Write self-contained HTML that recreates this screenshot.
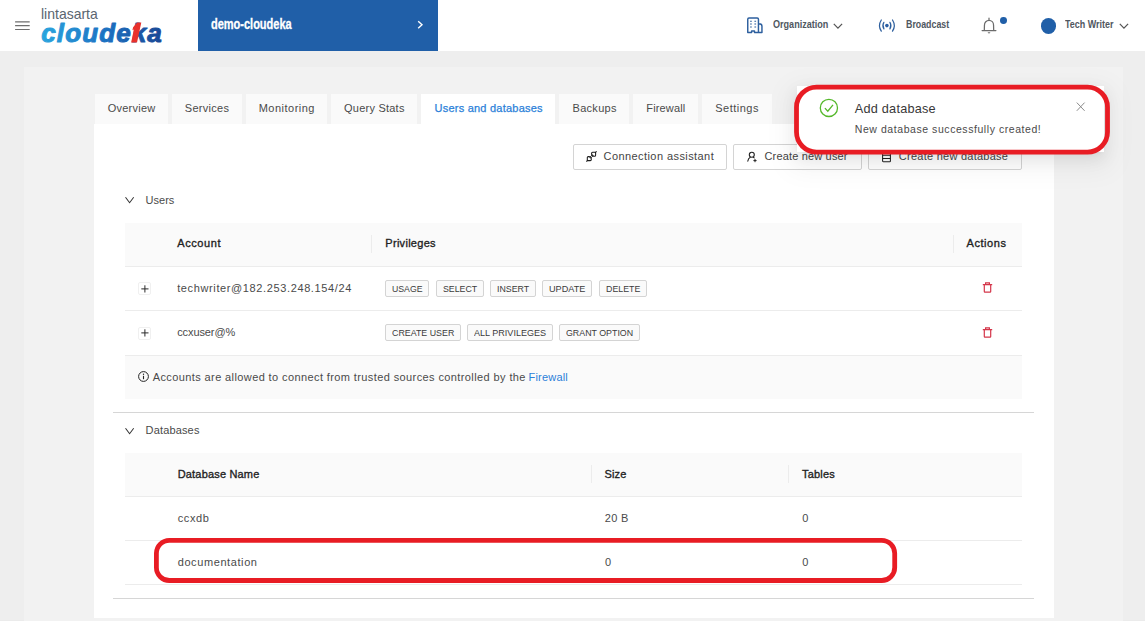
<!DOCTYPE html>
<html lang="en">
<head>
<meta charset="utf-8">
<title>demo-cloudeka - Users and databases</title>
<style>
*{box-sizing:border-box;margin:0;padding:0}
html,body{width:1145px;height:623px;overflow:hidden;background:#ffffff;font-family:"Liberation Sans",sans-serif;}
body{position:relative}
.abs,.t,.tab,.tag,.btn,.line{position:absolute}
.t{white-space:nowrap;display:block;line-height:20px}
#header{position:absolute;left:0;top:0;width:1145px;height:51px;background:#fff}
#proj{position:absolute;left:198px;top:0;width:240px;height:50.5px;background:#205fa8}
#outer{position:absolute;left:0;top:0;width:1145px;height:621px;background:#eeeeee;border-bottom:1px solid #ebebeb}
#inner{position:absolute;left:24px;top:67px;width:1099px;height:553.5px;background:#f2f2f2}
#card{position:absolute;left:94px;top:124px;width:960px;height:494px;background:#fff}
.tab{top:94px;height:30px;background:#fafafa}
.tab.act{background:#fff}
.btn{top:144px;height:26px;border:1px solid #d4d4d4;border-radius:2px;background:#fff}
.thead{position:absolute;left:125px;width:897px;background:#fafafa;border-bottom:1px solid #ececec}
.line{height:1px;background:#ececec;left:125px;width:897px}
.div{position:absolute;left:113px;width:921px;height:1px;background:#d6d6d6}
.sep{position:absolute;width:1px;height:18px;background:#ececec}
.tag{height:17.3px;background:#fafafa;border:1px solid #d4d4d4;border-radius:2px}
.exp{position:absolute;left:138.4px;width:12.8px;height:12.8px;border:1px solid #f0f0f0;border-radius:2px;background:#fff}
#notif{position:absolute;left:797px;top:86px;width:307px;height:66px;background:#fff;box-shadow:0 3px 6px -4px rgba(0,0,0,.12),0 6px 16px 0 rgba(0,0,0,.08),0 9px 28px 8px rgba(0,0,0,.05)}
svg{position:absolute;overflow:visible}
</style>
</head>
<body>
<div id="outer"></div>
<div id="inner"></div>
<div id="card"></div>

<!-- header -->
<div id="header"></div>
<svg style="left:15px;top:20px" width="15" height="11" viewBox="0 0 15 11"><path d="M0.1 1.8h14.6M0.1 5.7h14.6M0.1 9.5h14.6" stroke="#6e6e6e" stroke-width="1.2" fill="none"/></svg>
<span class="t" style="top:4px;font-size:14.6px;color:#5a6570;left:40.80px;transform:scaleX(0.9587);transform-origin:0 0;">lintasarta</span>
<svg style="left:0;top:0" width="200" height="50" viewBox="0 0 200 50">
 <defs><linearGradient id="lg" gradientUnits="userSpaceOnUse" x1="41" y1="0" x2="163" y2="0"><stop offset="0" stop-color="#2ba5de"/><stop offset="0.5" stop-color="#1d74c4"/><stop offset="1" stop-color="#1a4794"/></linearGradient></defs>
 <text x="41.3" y="42.1" font-family="Liberation Sans, sans-serif" font-weight="700" font-style="italic" font-size="26" fill="url(#lg)" stroke="url(#lg)" stroke-width="1.0" stroke-linejoin="round" textLength="120.5" lengthAdjust="spacing">cloudeka</text>
</svg>
<svg id="one" style="left:0;top:0" width="200" height="50" viewBox="0 0 200 50"><path d="M131.2 42.6 L133.9 29.6 L132.4 30.3 L133.1 27.3 L137.2 22.5 L141.3 22.5 L137.0 42.6 Z" fill="#e8312c"/></svg>
<div id="proj"></div>
<svg style="left:417px;top:20px" width="8" height="10" viewBox="0 0 8 10"><path d="M1.2 1.2 L5 4.7 L1.2 8.2" stroke="#fff" stroke-width="1.4" fill="none"/></svg>
<span class="t" style="top:14px;font-size:14.2px;color:#fff;font-weight:700;left:210.90px;transform:scaleX(0.7750);transform-origin:0 0;-webkit-text-stroke:0.3px #fff;">demo-cloudeka</span>
<span class="t" style="top:14px;font-size:11.3px;color:#50575f;font-weight:700;left:772.60px;transform:scaleX(0.8023);transform-origin:0 0;">Organization</span>
<span class="t" style="top:14px;font-size:11.3px;color:#50575f;font-weight:700;left:905.80px;transform:scaleX(0.7816);transform-origin:0 0;">Broadcast</span>
<span class="t" style="top:14px;font-size:11.3px;color:#50575f;font-weight:700;left:1065.00px;transform:scaleX(0.7935);transform-origin:0 0;">Tech Writer</span>
<!-- org icon -->
<svg style="left:746px;top:16.3px" width="18" height="18" viewBox="0 0 18 18">
 <path d="M1.75 16.45 V3.2 Q1.75 1.95 3 1.95 H11.2 Q12.45 1.95 12.45 3.2 V16.45 M13.1 7.7 Q15.95 7.7 15.95 10.2 V16.45 M1.75 16.45 H5.6 V14.9 H8.5 V16.45 H15.95" stroke="#2d5f9e" stroke-width="1.45" fill="none" stroke-linejoin="round" stroke-linecap="round"/>
 <path d="M4.1 4.7h1.7v1.1H4.1zM8.4 4.7h1.7v1.1H8.4zM4.1 7.5h1.7v1.1H4.1zM8.4 7.5h1.7v1.1H8.4zM4.1 10.4h1.7v1.1H4.1zM8.4 10.4h1.7v1.1H8.4z" fill="#2d5f9e"/>
</svg>
<svg style="left:833px;top:23px" width="10" height="6" viewBox="0 0 10 6"><path d="M0.8 0.9 L4.95 5.1 L9.1 0.9" stroke="#555" stroke-width="1.25" fill="none"/></svg>
<!-- broadcast icon -->
<svg style="left:878px;top:19px" width="18" height="14" viewBox="0 0 18 14">
 <circle cx="8.9" cy="6.6" r="1.8" fill="#2a5ea4"/>
 <path d="M3.3 1 Q-0.3 6.6 3.3 12.2 M5.9 3.3 Q3.9 6.6 5.9 9.9 M14.5 1 Q18.1 6.6 14.5 12.2 M11.9 3.3 Q13.9 6.6 11.9 9.9" stroke="#2d5f9e" stroke-width="1.25" fill="none" stroke-linecap="round"/>
</svg>
<!-- bell -->
<svg style="left:981px;top:17px" width="16" height="18" viewBox="0 0 16 18">
 <path d="M1.1 13.5 H14.9 M3.3 13.5 L3.45 8 A4.55 4.55 0 0 1 12.55 8 L12.7 13.5 M8 3.4 V1.2" stroke="#6b6b6b" stroke-width="1.25" fill="none" stroke-linecap="round"/>
 <path d="M6.5 15.2 H9.5 L8 16.8 Z" fill="#6b6b6b"/>
</svg>
<div class="abs" style="left:1000.1px;top:17px;width:6.8px;height:6.8px;border-radius:50%;background:#205fa8"></div>
<div class="abs" style="left:1040.6px;top:18px;width:15.8px;height:15.8px;border-radius:50%;background:#205fa8"></div>
<svg style="left:1119px;top:22.5px" width="10" height="6" viewBox="0 0 10 6"><path d="M0.8 0.9 L4.95 5.1 L9.1 0.9" stroke="#555" stroke-width="1.25" fill="none"/></svg>

<!-- tabs -->
<div class="tab" style="left:95px;width:73px"></div>
<div class="tab" style="left:172px;width:70px"></div>
<div class="tab" style="left:246px;width:81px"></div>
<div class="tab" style="left:331px;width:86px"></div>
<div class="tab act" style="left:421px;width:134px"></div>
<div class="tab" style="left:559px;width:70px"></div>
<div class="tab" style="left:633px;width:65px"></div>
<div class="tab" style="left:702px;width:70px"></div>

<span class="t" style="top:98px;font-size:11px;color:#4a4a4a;left:107.70px;letter-spacing:0.247px;">Overview</span>
<span class="t" style="top:98px;font-size:11px;color:#4a4a4a;left:184.80px;letter-spacing:0.288px;">Services</span>
<span class="t" style="top:98px;font-size:11px;color:#4a4a4a;left:258.70px;letter-spacing:0.493px;">Monitoring</span>
<span class="t" style="top:98px;font-size:11px;color:#4a4a4a;left:344.10px;letter-spacing:0.222px;">Query Stats</span>
<span class="t" style="top:98px;font-size:11px;color:#2b7fd9;left:434.50px;letter-spacing:0.231px;-webkit-text-stroke:0.25px #2b7fd9;">Users and databases</span>
<span class="t" style="top:98px;font-size:11px;color:#4a4a4a;left:572.50px;letter-spacing:0.303px;">Backups</span>
<span class="t" style="top:98px;font-size:11px;color:#4a4a4a;left:646.30px;letter-spacing:0.158px;">Firewall</span>
<span class="t" style="top:98px;font-size:11px;color:#4a4a4a;left:715.30px;letter-spacing:0.480px;">Settings</span>

<!-- buttons -->
<div class="btn" style="left:573px;width:154px"></div>
<div class="btn" style="left:733px;width:129px"></div>
<div class="btn" style="left:868px;width:154px"></div>
<svg style="left:586px;top:151px" width="11" height="11" viewBox="0 0 11 11">
 <g stroke="#1c1c1c" stroke-width="1.05" fill="none" stroke-linecap="round" stroke-linejoin="round"><path d="M0.6 10.3 L1.6 9.3 M9.3 1.6 L10.3 0.6"/><path d="M1.3 9.4 V6.6 Q1.3 5.6 2.3 5.6 H3.4 L5.3 7.5 V8.6 Q5.3 9.6 4.3 9.6 H1.5 Z"/><path d="M9.6 1.5 V4.3 Q9.6 5.3 8.6 5.3 H7.5 L5.6 3.4 V2.3 Q5.6 1.3 6.6 1.3 H9.4 Z"/><path d="M4 6.1 L6.1 4 M4.9 7 L7 4.9" stroke-width="0.9"/></g>
</svg>
<svg style="left:746.5px;top:151.5px" width="10" height="10" viewBox="0 0 10 10">
 <g stroke="#222" stroke-width="1.1" fill="none" stroke-linecap="round"><circle cx="4.8" cy="2.8" r="2.5"/><path d="M0.8 9.2 Q1.2 6.3 3.3 5.3 M6.3 5.3 L7.2 5.9"/><path d="M8 7.4 V9.8 M6.8 8.6 H9.2" stroke-width="1"/></g>
</svg>
<svg style="left:882px;top:151.5px" width="9" height="10" viewBox="0 0 9 10">
 <g stroke="#222" stroke-width="1.05" fill="none"><rect x="0.6" y="0.4" width="7.8" height="9.3" rx="0.7"/><path d="M0.6 3.3 H8.4 M0.6 6.4 H8.4"/></g>
</svg>
<span class="t" style="top:146px;font-size:11px;color:#444;left:603.60px;letter-spacing:0.420px;">Connection assistant</span>
<span class="t" style="top:146px;font-size:11px;color:#444;left:764.50px;letter-spacing:0.164px;">Create new user</span>
<span class="t" style="top:146px;font-size:11px;color:#444;left:898.80px;letter-spacing:0.257px;">Create new database</span>

<!-- users -->
<svg style="left:125px;top:197px" width="10" height="7" viewBox="0 0 10 7"><path d="M0.5 0.3 L4.6 5.7 L8.7 0.3" stroke="#333" stroke-width="1.05" fill="none"/></svg>
<div class="thead" style="top:223px;height:44px"></div>
<div class="sep" style="left:371px;top:235px"></div>
<div class="sep" style="left:953px;top:235px"></div>
<div class="line" style="top:310px"></div>
<div class="line" style="top:355px"></div>
<div class="abs" style="left:125px;top:355.6px;width:897px;height:43px;background:#fafafa"></div>
<div class="exp" style="top:282.4px"></div>
<div class="exp" style="top:326.8px"></div>
<svg style="left:141px;top:285px" width="8" height="8" viewBox="0 0 8 8"><path d="M0.3 3.9 H7.5 M3.9 0.3 V7.5" stroke="#2a2a2a" stroke-width="1"/></svg>
<svg style="left:141.1px;top:329.2px" width="8" height="8" viewBox="0 0 8 8"><path d="M0.3 3.9 H7.5 M3.9 0.3 V7.5" stroke="#2a2a2a" stroke-width="1"/></svg>
<svg style="left:138.2px;top:371px" width="11" height="11" viewBox="0 0 11 11"><circle cx="5.5" cy="5.5" r="4.9" stroke="#222" stroke-width="1" fill="none"/><path d="M5.5 4.8 V8.2" stroke="#222" stroke-width="1.1"/><circle cx="5.5" cy="3.2" r="0.7" fill="#222"/></svg>
<div class="tag" style="left:385.0px;top:280.2px;width:43.9px"></div>
<div class="tag" style="left:436.1px;top:280.2px;width:47.6px"></div>
<div class="tag" style="left:490.1px;top:280.2px;width:45.5px"></div>
<div class="tag" style="left:542.1px;top:280.2px;width:49.7px"></div>
<div class="tag" style="left:599.1px;top:280.2px;width:47.8px"></div>
<div class="tag" style="left:385.0px;top:324.2px;width:75.7px"></div>
<div class="tag" style="left:467.2px;top:324.2px;width:85.5px"></div>
<div class="tag" style="left:559.4px;top:324.2px;width:80.5px"></div>

<span class="t" style="top:279px;font-size:9.5px;color:#3a3a3a;left:391.70px;transform:scaleX(0.9170);transform-origin:0 0;">USAGE</span>
<span class="t" style="top:279px;font-size:9.5px;color:#3a3a3a;left:442.80px;transform:scaleX(0.9254);transform-origin:0 0;">SELECT</span>
<span class="t" style="top:279px;font-size:9.5px;color:#3a3a3a;left:496.80px;transform:scaleX(0.9260);transform-origin:0 0;">INSERT</span>
<span class="t" style="top:279px;font-size:9.5px;color:#3a3a3a;left:548.80px;transform:scaleX(0.9596);transform-origin:0 0;">UPDATE</span>
<span class="t" style="top:279px;font-size:9.5px;color:#3a3a3a;left:605.80px;transform:scaleX(0.9309);transform-origin:0 0;">DELETE</span>
<span class="t" style="top:323px;font-size:9.5px;color:#3a3a3a;left:391.70px;transform:scaleX(0.9318);transform-origin:0 0;">CREATE USER</span>
<span class="t" style="top:323px;font-size:9.5px;color:#3a3a3a;left:473.90px;transform:scaleX(0.9526);transform-origin:0 0;">ALL PRIVILEGES</span>
<span class="t" style="top:323px;font-size:9.5px;color:#3a3a3a;left:566.10px;transform:scaleX(0.9302);transform-origin:0 0;">GRANT OPTION</span>
<span class="t" style="top:190px;font-size:11px;color:#4a4a4a;left:145.60px;letter-spacing:-0.005px;">Users</span>
<span class="t" style="top:233px;font-size:11px;color:#222;left:177.30px;letter-spacing:0.576px;-webkit-text-stroke:0.33px #222;">Account</span>
<span class="t" style="top:233px;font-size:11px;color:#222;left:385.30px;letter-spacing:0.291px;-webkit-text-stroke:0.33px #222;">Privileges</span>
<span class="t" style="top:233px;font-size:11px;color:#222;left:966.50px;letter-spacing:0.572px;-webkit-text-stroke:0.33px #222;">Actions</span>
<span class="t" style="top:278px;font-size:11px;color:#4a4a4a;left:177.20px;letter-spacing:0.621px;">techwriter@182.253.248.154/24</span>
<span class="t" style="top:322px;font-size:11px;color:#4a4a4a;left:177.20px;letter-spacing:-0.094px;">ccxuser@%</span>
<span class="t" style="top:367px;font-size:11px;color:#4a4a4a;left:152.70px;letter-spacing:0.396px;">Accounts are allowed to connect from trusted sources controlled by the</span>
<span class="t" style="top:367px;font-size:11px;color:#2b7fd9;left:528.50px;letter-spacing:0.201px;">Firewall</span>
<!-- trash -->
<svg style="left:982px;top:282px" width="11" height="11" viewBox="0 0 11 11"><g stroke="#d4364a" stroke-width="1.2" fill="none"><path d="M0.8 2.6 H10.2 M3.6 2.4 V0.8 H7.4 V2.4 M2.3 2.8 V9.5 Q2.3 10.1 2.9 10.1 H8.1 Q8.7 10.1 8.7 9.5 V2.8"/></g></svg>
<svg style="left:982px;top:327px" width="11" height="11" viewBox="0 0 11 11"><g stroke="#d4364a" stroke-width="1.2" fill="none"><path d="M0.8 2.6 H10.2 M3.6 2.4 V0.8 H7.4 V2.4 M2.3 2.8 V9.5 Q2.3 10.1 2.9 10.1 H8.1 Q8.7 10.1 8.7 9.5 V2.8"/></g></svg>

<div class="div" style="top:412px"></div>

<!-- databases -->
<svg style="left:125px;top:427.5px" width="10" height="7" viewBox="0 0 10 7"><path d="M0.5 0.3 L4.6 5.7 L8.7 0.3" stroke="#333" stroke-width="1.05" fill="none"/></svg>
<div class="thead" style="top:453px;height:44px"></div>
<div class="sep" style="left:591px;top:465px"></div>
<div class="sep" style="left:788px;top:465px"></div>
<div class="line" style="top:540px"></div>
<div class="line" style="top:584px"></div>
<span class="t" style="top:420px;font-size:11px;color:#4a4a4a;left:145.60px;letter-spacing:0.151px;">Databases</span>
<span class="t" style="top:464px;font-size:11px;color:#222;left:177.70px;letter-spacing:0.176px;-webkit-text-stroke:0.33px #222;">Database Name</span>
<span class="t" style="top:464px;font-size:11px;color:#222;left:604.60px;letter-spacing:0.102px;-webkit-text-stroke:0.33px #222;">Size</span>
<span class="t" style="top:464px;font-size:11px;color:#222;left:802.10px;letter-spacing:0.160px;-webkit-text-stroke:0.33px #222;">Tables</span>
<span class="t" style="top:508px;font-size:11px;color:#4a4a4a;left:177.70px;letter-spacing:0.617px;">ccxdb</span>
<span class="t" style="top:508px;font-size:11px;color:#4a4a4a;left:604.80px;letter-spacing:0.324px;">20 B</span>
<span class="t" style="top:508px;font-size:11px;color:#4a4a4a;left:802.30px;letter-spacing:0.000px;">0</span>
<span class="t" style="top:552px;font-size:11px;color:#4a4a4a;left:177.70px;letter-spacing:0.595px;">documentation</span>
<span class="t" style="top:552px;font-size:11px;color:#4a4a4a;left:605.00px;letter-spacing:0.000px;">0</span>
<span class="t" style="top:552px;font-size:11px;color:#4a4a4a;left:802.30px;letter-spacing:0.000px;">0</span>
<div class="div" style="top:598px"></div>

<!-- notification -->
<div id="notif"></div>
<svg style="left:818.5px;top:98.4px" width="20" height="20" viewBox="0 0 20 20"><circle cx="9.9" cy="9.9" r="8.6" stroke="#55b82b" stroke-width="1.3" fill="none"/><path d="M5.9 10.1 L8.8 13.2 L14 6.8" stroke="#55b82b" stroke-width="1.3" fill="none"/></svg>
<svg style="left:1076px;top:102px" width="10" height="10" viewBox="0 0 10 10"><path d="M0.8 0.6 L8.6 8.8 M8.6 0.6 L0.8 8.8" stroke="#8a8a8a" stroke-width="1"/></svg>
<span class="t" style="top:99px;font-size:12.7px;color:#383838;left:854.80px;letter-spacing:0.229px;">Add database</span>
<span class="t" style="top:119px;font-size:10.5px;color:#4a4a4a;left:854.80px;letter-spacing:0.560px;">New database successfully created!</span>

<!-- annotations -->
<svg style="left:0;top:0" width="1145" height="623" viewBox="0 0 1145 623">
 <rect x="796.5" y="87.2" width="311" height="64.9" rx="20" ry="20" fill="none" stroke="#e81c24" stroke-width="4.8"/>
 <rect x="156.4" y="540.3" width="738.3" height="40.2" rx="13" ry="13" fill="none" stroke="#e81c24" stroke-width="4.8"/>
</svg>
</body>
</html>
